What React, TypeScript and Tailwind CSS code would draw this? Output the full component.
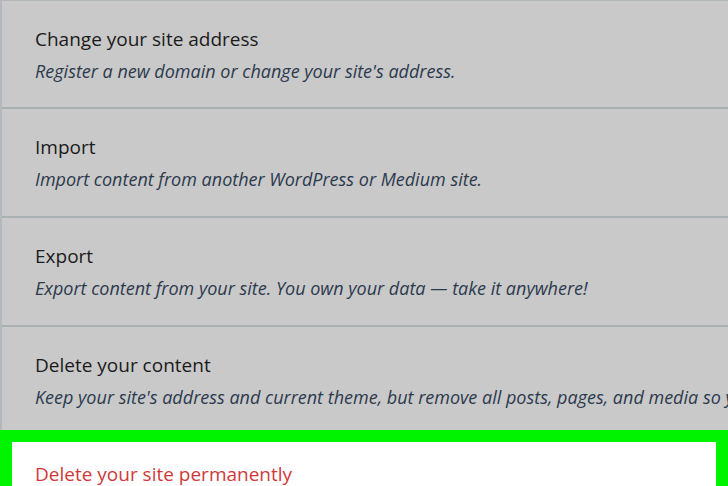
const rows = [
  {
    title: 'Change your site address',
    desc: "Register a new domain or change your site's address.",
  },
  {
    title: 'Import',
    desc: 'Import content from another WordPress or Medium site.',
  },
  {
    title: 'Export',
    desc: 'Export content from your site. You own your data — take it anywhere!',
  },
  {
    title: 'Delete your content',
    desc: "Keep your site's address and current theme, but remove all posts, pages, and media so you can start over.",
  },
]

export default function App() {
  return (
    <div
      className="h-[486px] w-[728px] overflow-hidden bg-[#c9c9c9]"
      style={{ fontFamily: '"Open Sans", "Noto Sans", sans-serif' }}
    >
      <div className="border-l-2 border-t border-[#b3b8bb]">
        {rows.map((row, i) => (
          <div
            key={row.title}
            className={
              i === 0
                ? 'h-[108px] border-b-2 border-[#a9b0b2] pl-[33px] pt-[24px]'
                : i < rows.length - 1
                  ? 'h-[109px] border-b-2 border-[#a9b0b2] pl-[33px] pt-[24px]'
                  : 'h-[103px] pl-[33px] pt-[24px]'
            }
          >
            <div className="whitespace-nowrap text-[19px] leading-[28px] text-[#1b1b1b]">
              {row.title}
            </div>
            <div className="mt-[6px] whitespace-nowrap text-[18px] italic leading-[24px] text-[#2c3a4e]">
              {row.desc}
            </div>
          </div>
        ))}
      </div>
      <div className="bg-[#00f400] px-[12px] pt-[12px]">
        <div className="h-[60px] bg-white pl-[23px] pt-[18px]">
          <div className="whitespace-nowrap text-[19px] leading-[28px] text-[#d0393b]">
            Delete your site permanently
          </div>
        </div>
      </div>
    </div>
  )
}
